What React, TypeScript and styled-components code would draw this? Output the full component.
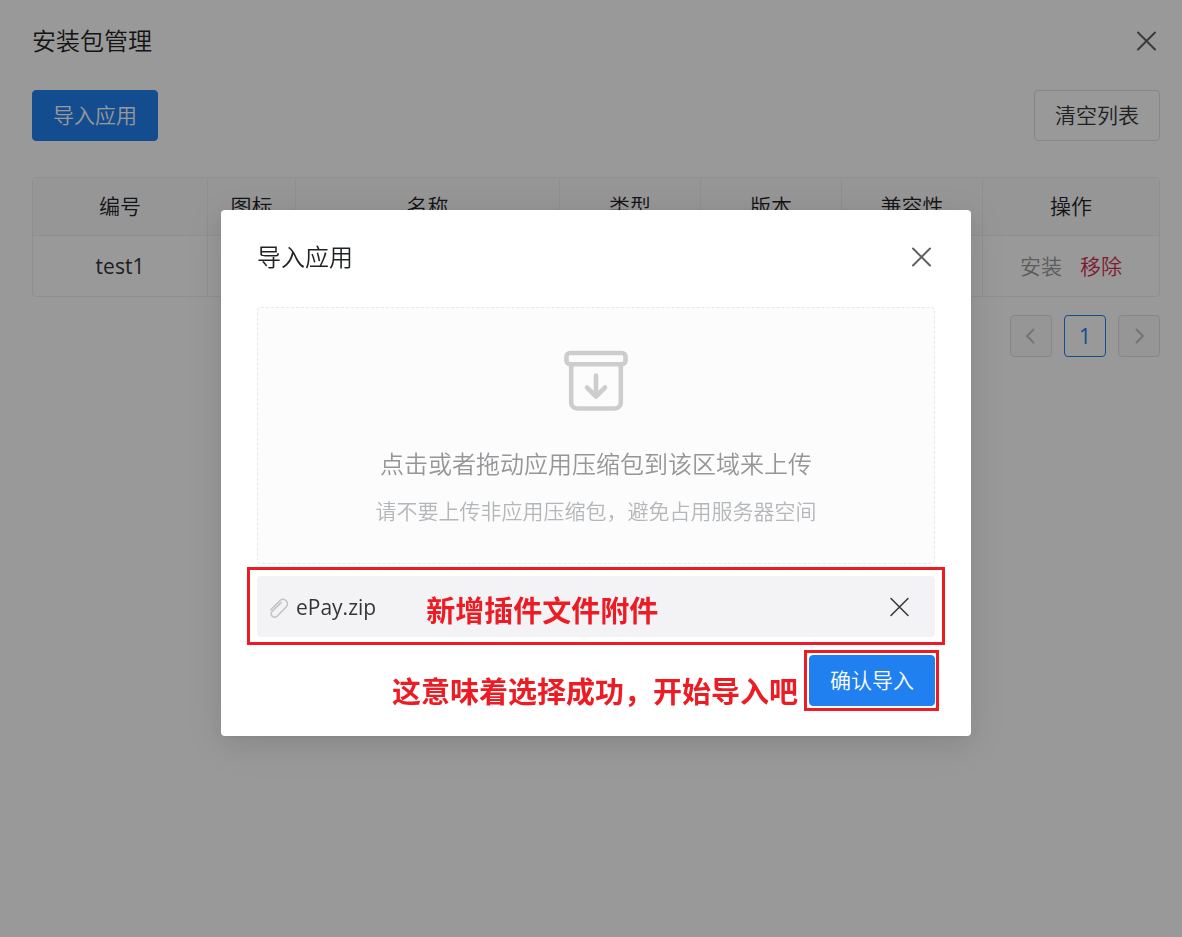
import React from 'react';
import styled, { createGlobalStyle } from 'styled-components';

const GlobalStyle = createGlobalStyle`
  *, *::before, *::after { box-sizing: border-box; }
  html, body, #root { height: 100%; }
  body {
    margin: 0;
    background: #fff;
    color: #333639;
    font-family: "Open Sans", "Noto Sans CJK SC", sans-serif;
    font-size: 21px;
    line-height: 32px;
    font-weight: 350;
  }
  button { font: inherit; color: inherit; cursor: pointer; }
  h1, h2, p { margin: 0; font-weight: inherit; }
`;

const Page = styled.div`
  min-height: 100%;
  padding: 24px 22px 24px 32px;
`;

const Header = styled.header`
  display: flex;
  align-items: center;
  justify-content: space-between;
  height: 34px;
`;

const Title = styled.h1`
  font-size: 24px;
  line-height: 34px;
  color: #1f2225;
`;

const IconButton = styled.button`
  display: flex;
  align-items: center;
  justify-content: center;
  width: 28px;
  height: 28px;
  padding: 0;
  border: 0;
  background: none;
`;

const Toolbar = styled.div`
  display: flex;
  justify-content: space-between;
  margin: 32px 0 36px;
`;

const Button = styled.button<{ $primary?: boolean }>`
  flex: none;
  height: 51px;
  padding: 0 20px 2px;
  white-space: nowrap;
  border: 1px solid ${p => (p.$primary ? '#2080f0' : '#e0e0e6')};
  border-radius: 4px;
  background: ${p => (p.$primary ? '#2080f0' : '#fff')};
  color: ${p => (p.$primary ? '#fff' : '#333639')};
`;

const Table = styled.table`
  width: 100%;
  table-layout: fixed;
  border-collapse: separate;
  border-spacing: 0;
  border: 1px solid #efeff5;
  border-radius: 4px;
`;

const HeadCell = styled.th`
  height: 58px;
  padding: 0 0 2px;
  background: #fafafc;
  color: #1f2225;
  font-weight: inherit;
  border-bottom: 1px solid #efeff5;
  & + & { border-left: 1px solid #efeff5; }
`;

const Cell = styled.td`
  height: 60px;
  padding: 0;
  text-align: center;
  & + & { border-left: 1px solid #efeff5; }
`;

const Latin = styled.span`
  font-weight: 400;
`;

const Actions = styled.div`
  display: flex;
  justify-content: center;
  gap: 18px;
`;

const TextButton = styled.button<{ $danger?: boolean }>`
  padding: 0;
  border: 0;
  background: none;
  color: ${p => (p.$danger ? '#d03050' : '#333639')};
  &:disabled { opacity: 0.5; cursor: default; }
`;

const Pagination = styled.nav`
  display: flex;
  justify-content: flex-end;
  gap: 12px;
  margin-top: 18px;
`;

const PageButton = styled.button<{ $active?: boolean }>`
  display: flex;
  align-items: center;
  justify-content: center;
  width: 42px;
  height: 42px;
  padding: 0;
  border: 1px solid ${p => (p.$active ? '#2080f0' : '#e0e0e6')};
  border-radius: 4px;
  background: ${p => (p.$active ? '#fff' : '#fafafc')};
  color: ${p => (p.$active ? '#2080f0' : '#c2c2c2')};
  font-weight: 400;
`;

const Overlay = styled.div`
  position: fixed;
  inset: 0;
  display: flex;
  align-items: flex-start;
  justify-content: center;
  padding: 210px 22px 24px 32px;
  background: rgba(0, 0, 0, 0.4);
`;

const Dialog = styled.section`
  width: 750px;
  max-width: 100%;
  padding: 30px 36px;
  background: #fff;
  border-radius: 4px;
  box-shadow: 0 9px 42px 12px rgba(0, 0, 0, 0.05), 0 6px 24px rgba(0, 0, 0, 0.08), 0 3px 9px -6px rgba(0, 0, 0, 0.12);
`;

const DialogHeader = styled(Header)`
  margin-bottom: 33px;
`;

const DropZone = styled.button`
  display: flex;
  flex-direction: column;
  align-items: center;
  width: 100%;
  height: 257px;
  padding: 36px 24px;
  border: 1px dashed #e8e8ec;
  border-radius: 4px;
  background: #fcfcfd;
  white-space: nowrap;
`;

const DropTitle = styled.span`
  margin-top: 30px;
  font-size: 24px;
  line-height: 36px;
  color: #949698;
`;

const DropHint = styled.span`
  margin-top: 13px;
  color: #b4b7ba;
`;

const FileRow = styled.div`
  position: relative;
  display: flex;
  align-items: center;
  height: 61px;
  margin-top: 12px;
  padding: 0 22px 0 12px;
  border-radius: 4px;
  background: #f3f3f5;
`;

const Marker = styled.span<{ $inset: string }>`
  position: absolute;
  inset: ${p => p.$inset};
  border: 3px solid #ed1c24;
  pointer-events: none;
`;

const FileName = styled(Latin)`
  margin-left: 7px;
`;

const Note = styled.strong`
  font-size: 29px;
  line-height: 29px;
  font-weight: 700;
  color: #ed1c24;
  white-space: nowrap;
`;

const FileNote = styled(Note)`
  flex: 1;
  margin-left: 50px;
  padding-top: 8px;
`;

const Footer = styled.footer`
  display: flex;
  align-items: flex-start;
  justify-content: flex-end;
  gap: 11px;
  margin-top: 18px;
`;

const FooterNote = styled(Note)`
  padding-top: 22px;
`;

const Confirm = styled.div`
  position: relative;
  display: flex;
`;

const CloseIcon = ({ color = '#606163', weight = 2 }: { color?: string; weight?: number }) => (
  <svg width="22" height="22" viewBox="0 0 22 22" fill="none" stroke={color} strokeWidth={weight} strokeLinecap="round">
    <path d="M3 2.500l17 17M20 2.500l-17 17" />
  </svg>
);

const Chevron = ({ right }: { right?: boolean }) => (
  <svg width="18" height="18" viewBox="0 0 18 18" fill="none" stroke="currentColor" strokeWidth="2" strokeLinecap="round" strokeLinejoin="round">
    <path d={right ? 'M6.500 2.500L13 9l-6.500 6.500' : 'M11.500 2.500L5 9l6.500 6.500'} />
  </svg>
);

const ArchiveIcon = () => (
  <svg width="72" height="72" viewBox="0 0 72 72" fill="none" stroke="#cdcdcd" strokeWidth="4.600" strokeLinecap="round" strokeLinejoin="round">
    <rect x="6.500" y="9" width="59" height="11.200" rx="3.500" />
    <path d="M11.200 20.500V58.500a6 6 0 0 0 6 6h37.600a6 6 0 0 0 6-6V20.500" />
    <path d="M36 31.500v21M27 43.500l9 9 9-9" />
  </svg>
);

const ClipIcon = () => (
  <svg width="20" height="22" viewBox="0 0 20 22" fill="none" stroke="#c2c2c4" strokeWidth="1.600" strokeLinecap="round" strokeLinejoin="round">
    <path d="M1.800 13.700L10.800 4.700a4.400 4.400 0 0 1 6.300 6.300L8.100 20.200a3.400 3.400 0 0 1-4.900-4.900l8.900-8.700" />
  </svg>
);

const columns = [
  { label: '编号', width: 174 },
  { label: '图标', width: 88 },
  { label: '名称', width: 264 },
  { label: '类型', width: 141 },
  { label: '版本', width: 141 },
  { label: '兼容性', width: 141 },
  { label: '操作', width: 177 },
];

export default function App() {
  return (
    <>
      <GlobalStyle />
      <Page>
        <Header>
          <Title>安装包管理</Title>
          <IconButton type="button" aria-label="关闭"><CloseIcon /></IconButton>
        </Header>
        <Toolbar>
          <Button type="button" $primary>导入应用</Button>
          <Button type="button">清空列表</Button>
        </Toolbar>
        <Table>
          <colgroup>
            {columns.map(c => <col key={c.label} width={c.width} />)}
          </colgroup>
          <thead>
            <tr>{columns.map(c => <HeadCell key={c.label} scope="col">{c.label}</HeadCell>)}</tr>
          </thead>
          <tbody>
            <tr>
              <Cell><Latin>test1</Latin></Cell>
              <Cell /><Cell /><Cell /><Cell /><Cell />
              <Cell>
                <Actions>
                  <TextButton type="button" disabled>安装</TextButton>
                  <TextButton type="button" $danger>移除</TextButton>
                </Actions>
              </Cell>
            </tr>
          </tbody>
        </Table>
        <Pagination aria-label="分页">
          <PageButton type="button" aria-label="上一页" disabled><Chevron /></PageButton>
          <PageButton type="button" $active aria-current="page">1</PageButton>
          <PageButton type="button" aria-label="下一页" disabled><Chevron right /></PageButton>
        </Pagination>
      </Page>
      <Overlay>
        <Dialog role="dialog" aria-modal="true" aria-labelledby="import-title">
          <DialogHeader>
            <Title as="h2" id="import-title">导入应用</Title>
            <IconButton type="button" aria-label="关闭"><CloseIcon /></IconButton>
          </DialogHeader>
          <DropZone type="button">
            <ArchiveIcon />
            <DropTitle>点击或者拖动应用压缩包到该区域来上传</DropTitle>
            <DropHint>请不要上传非应用压缩包，避免占用服务器空间</DropHint>
          </DropZone>
          <FileRow>
            <ClipIcon />
            <FileName>ePay.zip</FileName>
            <FileNote>新增插件文件附件</FileNote>
            <IconButton type="button" aria-label="移除文件"><CloseIcon color="#333639" weight={1.5} /></IconButton>
            <Marker $inset="-9px -10px -8px" />
          </FileRow>
          <Footer>
            <FooterNote>这意味着选择成功，开始导入吧</FooterNote>
            <Confirm>
              <Button type="button" $primary>确认导入</Button>
              <Marker $inset="-5px -4px -5px -5px" />
            </Confirm>
          </Footer>
        </Dialog>
      </Overlay>
    </>
  );
}
